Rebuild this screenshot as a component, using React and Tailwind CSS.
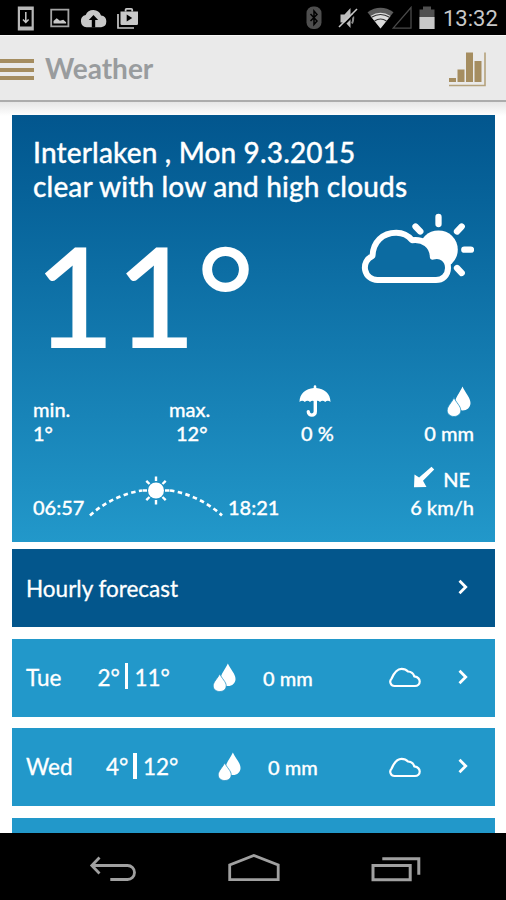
import React from 'react';

const days = [
  { name: 'Tue', min: '2°', max: '11°', rain: '0 mm', nameWidth: 'w-[71.5px]', tempWidth: 'w-[115.5px]' },
  { name: 'Wed', min: '4°', max: '12°', rain: '0 mm', nameWidth: 'w-[80px]', tempWidth: 'w-[112px]' },
];

const StatusBar = () => (
  <div className="h-[35px] shrink-0 bg-black flex items-center pl-[17px] pr-[8px] text-[#c8c8c8]">
    <svg className="w-[18px] h-[26px]" viewBox="0 0 18 26" fill="none" stroke="currentColor">
      <path d="M.8 1.500h16v24H.8z" fill="#b8b8b8" stroke="none" />
      <path d="M3 5h11.600v16.500H3z" fill="#000" stroke="none" />
      <path d="M8.800 7v10M6 14.500l2.800 3 2.800-3" strokeWidth="1.500" />
    </svg>
    <svg className="w-[20px] h-[20px] ml-[15px]" viewBox="0 0 20 20">
      <path d="M1.200 1.700h17.200v16.600H1.200z" fill="none" stroke="#a4a4a4" strokeWidth="1.800" />
      <path d="M3.500 15.500v-2.600l3.200-2.700 3.200 2.600 3.400-1 2.800 2.400v1.300z" fill="currentColor" />
    </svg>
    <svg className="w-[27px] h-[20px] ml-[10px]" viewBox="0 0 27 20">
      <path d="M6.500 19.300a6.200 6.200 0 0 1-.8-12.200A8.200 8.200 0 0 1 21 7.400a6 6 0 0 1 .2 11.900z" fill="currentColor" />
      <path d="M13.500 7 8.800 12h3v7.500h3.400V12h3z" fill="#000" />
    </svg>
    <svg className="w-[22px] h-[22px] ml-[10px]" viewBox="0 0 22 22">
      <path d="M1 7v14h16" fill="none" stroke="currentColor" strokeWidth="1.700" />
      <path d="M8.600 4.500V2.800a1 1 0 0 1 1-1h4.600a1 1 0 0 1 1 1v1.700" fill="none" stroke="currentColor" strokeWidth="1.800" />
      <path d="M3.500 4.500h17.500v12.200a1.300 1.300 0 0 1-1.300 1.300H4.800a1.300 1.300 0 0 1-1.300-1.300z" fill="currentColor" />
      <path d="M9.700 7.500v7l5.500-3.500z" fill="#000" />
    </svg>

    <svg className="w-[16px] h-[24px] ml-auto" viewBox="0 0 16 24">
      <rect x="0.5" y="0.5" width="15" height="22.5" rx="6.500" fill="#4e4e4e" />
      <path d="m4.500 8 6.500 7L8 18.500V5l3 3.500-6.500 6.500" fill="none" stroke="#000" strokeWidth="1.500" />
    </svg>
    <svg className="w-[20px] h-[24px] ml-[16px]" viewBox="0 0 20 24">
      <path d="M2.500 8.500h4l6-6.500v20l-5-5.500h-5z" fill="#bdbdbd" />
      <path d="M14 7.500q2.500 4.500 0 10" fill="none" stroke="#8c8c8c" strokeWidth="2" />
      <path d="M2.500 22 20 4.500" stroke="#000" strokeWidth="2" />
      <path d="M1 21 19 3" stroke="currentColor" strokeWidth="1.600" />
    </svg>
    <svg className="w-[27px] h-[22px] ml-[9px]" viewBox="0 0 27 22">
      <path d="M.5 5.200Q13.500-3.600 26.500 5.200L13.500 21.500z" fill="#5c5c5c" />
      <path d="M3.500 9Q13.500 2.500 23.500 9L13.500 21.500z" fill="#dcdcdc" />
      <path d="M4.500 10.200Q13.500 4.800 22.500 10.200M7.500 14Q13.500 10 19.500 14" fill="none" stroke="#333" strokeWidth="1.200" />
    </svg>
    <svg className="w-[20px] h-[23px] -ml-[2px]" viewBox="0 0 20 23">
      <path d="M1.200 22.200 19 1.500v20.700z" fill="none" stroke="#4a4a4a" strokeWidth="1.300" />
    </svg>
    <svg className="w-[16px] h-[24px] ml-[7px]" viewBox="0 0 16 24">
      <path d="M4 .5h8v3h3.500V23H.5V3.500H4z" fill="#505050" />
      <path d="M.5 11h15v12H.5z" fill="#c8c8c8" />
    </svg>
    <span className="ml-[8px] mt-[2px] font-['Roboto',sans-serif] text-[22px] leading-[26px] w-[55px] whitespace-nowrap">13:32</span>
  </div>
);

const Header = () => (
  <header className="h-[67px] shrink-0 bg-[#eaeaea] border-t border-t-[#f8f8f8] border-b-2 border-b-[#acacac] flex items-center">
    <div className="flex flex-col gap-[4.500px] mt-[3px]">
      <div className="w-[34px] h-[4px] bg-[#a58d60]" />
      <div className="w-[34px] h-[4px] bg-[#a58d60]" />
      <div className="w-[34px] h-[4px] bg-[#a58d60]" />
    </div>
    <h1 className="ml-[11px] text-[28px] leading-[32px] font-bold text-[#999c9e]">Weather</h1>
    <svg className="w-[38px] h-[36px] ml-auto mr-[20px] mt-[2px]" viewBox="0 0 38 36" fill="#a58d60">
      <path d="M1 27h7v4H1zM9.500 18.500h7V31h-7zM18 1.500h7V31h-7zM26.500 10h7v21h-7z" />
      <path d="M1 34.500h36V1.500" fill="none" stroke="#b5a27c" strokeWidth="1.600" />
    </svg>
  </header>
);

const PartlyCloudy = () => (
  <svg className="w-[114px] h-[72px]" viewBox="0 0 114 72" fill="none" stroke="#fff">
    <circle cx="78.500" cy="37.700" r="19.300" fill="#fff" stroke="none" />
    <path
      d="M17.500 68a12.500 12.500 0 0 1-5-24C13 30 22.500 20.700 36.300 20.700c6.500 0 11.700 2.500 15.700 7.500 11-1.500 20.500 5 20.800 16.500 9-2.500 15.200 3.500 15.200 11.300S82 68 76 68z"
      fill="#0c6ba1"
      strokeWidth="6"
      strokeLinejoin="round"
    />
    <path
      d="M78.500 5v7M97 19.500l4.700-5M104.300 37.700h6.700M97 56l4.700 5M60.300 19.500l-4.800-5"
      strokeWidth="6.300"
      strokeLinecap="round"
    />
  </svg>
);

const Drops = ({ className }) => (
  <svg className={className} viewBox="0 0 24 31" fill="#fff" preserveAspectRatio="none">
    <path d="M15.500.5c2.500 6 8 11 8 16.500 0 4.500-3.500 7.500-7.800 7.500S8 21.500 8 17C8 11.500 13 6.500 15.500.5z" />
    <path d="M7 11.500c2 5 6.800 8.500 6.800 13 0 3.500-3 6-6.800 6s-6.800-2.500-6.800-6c0-4.500 4.800-8 6.800-13z" stroke="#2090c3" strokeWidth="0.800" />
  </svg>
);

const Umbrella = () => (
  <svg className="w-[32px] h-[32px]" viewBox="0 0 32 32" fill="#fff">
    <path d="M.5 17C.5 8.500 7 3.500 14.700 3V1.500a1.300 1.300 0 0 1 2.600 0V3C25 3.500 31.500 8.500 31.500 17q-2.700-2.600-5.300 0-2.600-2.600-5.200 0-2.500-2.600-5 0-2.500-2.600-5 0-2.600-2.600-5.200 0-2.600-2.600-5.300 0z" />
    <path d="M16.300 15v11.500a3.500 3.500 0 0 1-7 .3" fill="none" stroke="#fff" strokeWidth="3.400" strokeLinecap="round" />
  </svg>
);

const SunPath = () => (
  <svg className="w-[136px] h-[44px] ml-[3.500px] mb-[1.500px]" viewBox="0 0 136 44" fill="none" stroke="#fff">
    <path d="M2 41.500A99.600 99.600 0 0 1 54 16.500M82 16.500A99.600 99.600 0 0 1 134 41.500" strokeWidth="2.700" strokeDasharray="4.500 3.400" />
    <circle cx="68" cy="16.500" r="8" fill="#fff" stroke="none" />
    <path d="M68 2.500v4.500M68 26v4.500M77 16.500h4.500M54.500 16.500H59M58.300 6.800l3.200 3.200M74.500 23l3.200 3.200M58.300 26.200l3.200-3.200M74.500 10l3.200-3.200" strokeWidth="2.400" />
  </svg>
);

const Chevron = () => (
  <svg className="w-[10px] h-[16px] -mt-[2px]" viewBox="0 0 10 16" fill="none" stroke="#fff" strokeWidth="2.800">
    <path d="m1.500 1.800 6.200 6.200-6.200 6.200" />
  </svg>
);

const Today = () => (
  <section className="h-[427px] shrink-0 bg-linear-to-b from-[#02568e] to-[#2298ca] pt-[21px] pl-[21px] pr-[21px]">
    <h2 className="text-[28px] leading-[33.500px] font-medium tracking-[0.15px] [-webkit-text-stroke:0.3px_white]">
      Interlaken , Mon 9.3.2015
      <br />
      clear with low and high clouds
    </h2>

    <div className="h-[182px] flex justify-between items-start">
      <p className="mt-[20.500px] pl-px text-[140px] leading-[141px] font-medium">11°</p>
      <div className="mt-[9px]">
        <PartlyCloudy />
      </div>
    </div>

    <div className="h-[60px] flex items-end text-[20px] leading-[24px] font-medium [-webkit-text-stroke:0.3px_white]">
      <div className="w-[136px]">
        <p>min.</p>
        <p>1°</p>
      </div>
      <div className="w-[130px]">
        <p>max.</p>
        <p className="pl-[7px]">12°</p>
      </div>
      <div>
        <Umbrella />
        <p className="mt-[4px] pl-[2px]">0 %</p>
      </div>
      <div className="ml-auto flex flex-col items-end">
        <Drops className="w-[24px] h-[31px] mr-[3px]" />
        <p className="mt-[4px]">0 mm</p>
      </div>
    </div>

    <div className="mt-[22px] flex items-end text-[20px] leading-[24px] font-medium [-webkit-text-stroke:0.3px_white]">
      <p>06:57</p>
      <SunPath />
      <p className="ml-[4px]">18:21</p>
      <div className="ml-auto flex flex-col items-end gap-[4px]">
        <div className="flex items-center pr-[4px]">
          <svg className="w-[22px] h-[22px] mr-[8px] -mt-[4px]" viewBox="0 0 22 22" fill="#fff">
            <path d="M18.500.8 21.200 3.500 10 14.700l3.500 6.300L1 21.200 1.500 8.500l4.600 3z" />
          </svg>
          <span>NE</span>
        </div>
        <p>6 km/h</p>
      </div>
    </div>
  </section>
);

const DayRow = ({ day }) => (
  <div className="h-[78px] shrink-0 bg-[#2298ca] flex items-center pl-[14px] pr-[27px] text-[22.500px] [-webkit-text-stroke:0.3px_white]">
    <span className={day.nameWidth}>{day.name}</span>
    <div className={`flex items-center ${day.tempWidth}`}>
      <span>{day.min}</span>
      <div className="w-[3.500px] h-[26px] bg-white ml-[5px] mr-[6px] -mt-[3px]" />
      <span>{day.max}</span>
    </div>
    <Drops className="w-[23px] h-[29px] -mt-px" />
    <span className="ml-[27px] text-[20px] font-medium">{day.rain}</span>
    <div className="ml-auto flex items-center">
      <svg className="w-[32px] h-[21px]" viewBox="0 0 32 21" fill="none" stroke="#fff" strokeWidth="2.200">
        <path d="M5.500 19a4.300 4.300 0 0 1-3-7.300C4.500 7 7.500 1.800 12.500 1.800c3 0 5 1 6.500 2.700 3.500.2 5.500 2.300 6.300 4.800 3.700.7 5.400 2.600 5.400 5.200 0 2.700-2 4.500-4.700 4.500z" />
      </svg>
      <div className="ml-[37px]">
        <Chevron />
      </div>
    </div>
  </div>
);

const NavBar = () => (
  <nav className="h-[67px] shrink-0 bg-black flex items-center pl-[89px] pr-[84px] justify-between">
    <svg className="w-[50px] h-[30px]" viewBox="0 0 50 30" fill="none" stroke="#a0a0a0" strokeWidth="2.800">
      <path d="M10.500 5.500 2.800 13.500l7.700 8M2.800 13.500H38.500a7 7 0 0 1 0 14H21.300" />
    </svg>
    <svg className="w-[54px] h-[30px]" viewBox="0 0 54 30" fill="none" stroke="#a0a0a0" strokeWidth="2.800">
      <path d="M1.700 27.700V13L25.800 3.500 50.200 13v14.700z" />
    </svg>
    <svg className="w-[51px] h-[30px]" viewBox="0 0 51 30" fill="none" stroke="#a0a0a0" strokeWidth="3">
      <path d="M2 13.400h37.200v14.400H2zM11.300 6.700H47.800v16" />
    </svg>
  </nav>
);

const App = () => {
  return (
    <div className="w-[506px] h-[900px] overflow-hidden flex flex-col bg-white text-white font-['Lato',sans-serif]">
      <StatusBar />
      <Header />
      <main className="flex-1 min-h-0 overflow-hidden bg-linear-to-b from-[#e6e6e6] to-white to-[14px] flex flex-col pt-[13px] pl-[12px] pr-[11px]">
        <Today />
        <div className="mt-[7px] h-[78px] shrink-0 bg-[#03568c] flex items-center justify-between pl-[14px] pr-[27px] text-[22.500px] [-webkit-text-stroke:0.3px_white]">
          <span className="mt-[2px]">Hourly forecast</span>
          <Chevron />
        </div>
        <div className="mt-[11.500px] flex flex-col gap-[11.500px]">
          {days.map((day) => (
            <DayRow key={day.name} day={day} />
          ))}
          <div className="h-[78px] shrink-0 bg-[#2298ca]" />
        </div>
      </main>
      <NavBar />
    </div>
  );
};

export default App;
